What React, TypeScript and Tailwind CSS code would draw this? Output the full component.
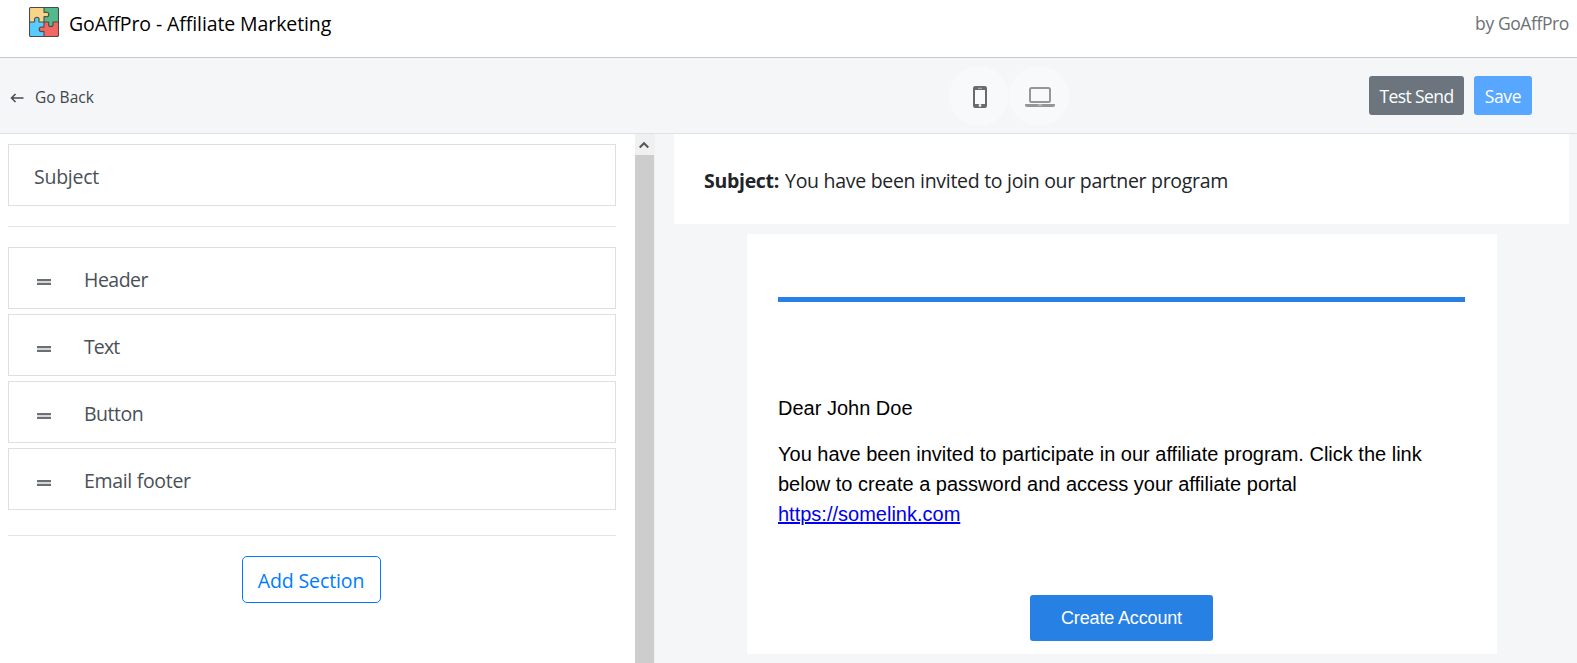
import React from "react";

const sections = [
  { label: "Header", tracking: "tracking-[-0.5px]" },
  { label: "Text", tracking: "tracking-[-0.9px]" },
  { label: "Button", tracking: "tracking-[-0.5px]" },
  { label: "Email footer", tracking: "tracking-[-0.32px]" },
];

function Logo() {
  return (
    <svg width="30" height="30" viewBox="0 0 30 30" className="block shrink-0">
      <rect x="0.5" y="0.5" width="29" height="29" rx="1.2" fill="#f7d488" />
      <path d="M15 .5h13.5a1 1 0 0 1 1 1V15h-5.200c-.9 0-.2 1.200-.2 2.300a2.300 2.300 0 0 1-4.600 0c0-1.100.8-2.300-.2-2.300H15V10c0-.9 1.200-.2 2.500-.2a2.300 2.300 0 0 0 0-4.600C16.200 5.200 15 6 15 5z" fill="#54b98c" />
      <path d="M.5 15h4.800c.9 0 .2-1.200.2-2.500a2.300 2.300 0 0 1 4.600 0c0 1.300-.8 2.500.2 2.500H15v4.800c0 .9-1.200.2-2.500.2a2.300 2.300 0 0 0 0 4.600c1.300 0 2.500-.8 2.500.2v4.700H1.500a1 1 0 0 1-1-1z" fill="#59ccff" />
      <path d="M15 15h4.300c1 0 .2 1.200.2 2.300a2.300 2.300 0 0 0 4.600 0c0-1.100-.7-2.300.2-2.300h5.200v13.500a1 1 0 0 1-1 1H15v-4.700c0-1-1.200-.2-2.500-.2a2.300 2.300 0 0 1 0-4.600c1.300 0 2.500.7 2.500-.2z" fill="#f16763" />
      <g fill="none" stroke="#4d4a45" strokeWidth="1.1">
        <rect x="0.5" y="0.5" width="29" height="29" rx="1.200" />
        <path d="M15 .5V5c0 1 1.200.2 2.500.2a2.300 2.300 0 0 1 0 4.600c-1.300 0-2.500-.7-2.500.2v9.800c0 .9-1.200.2-2.500.2a2.300 2.300 0 0 0 0 4.600c1.300 0 2.500-.8 2.500.2v4.700" />
        <path d="M.5 15h4.800c.9 0 .2-1.200.2-2.500a2.300 2.300 0 0 1 4.600 0c0 1.300-.8 2.500.2 2.500h9c1 0 .2 1.200.2 2.300a2.300 2.300 0 0 0 4.600 0c0-1.100-.7-2.300.2-2.300h5.200" />
      </g>
    </svg>
  );
}

function PhoneIcon() {
  return (
    <svg width="14" height="22" viewBox="0 0 14 22" className="block">
      <rect x="0" y="0" width="14" height="22" rx="2.200" fill="#6b6b6b" />
      <rect x="2" y="4" width="10" height="14" fill="#fafafa" />
      <rect x="5" y="1.800" width="4" height="1" rx="0.5" fill="#bbb" />
      <circle cx="7" cy="19.500" r="1.400" fill="#eee" />
    </svg>
  );
}

function LaptopIcon() {
  return (
    <svg width="30" height="20" viewBox="0 0 30 20" className="block">
      <rect x="5" y="1" width="20" height="14" rx="1.500" fill="none" stroke="#969696" strokeWidth="2" />
      <path d="M0 17h30v1q0 2-2 2H2q-2 0-2-2z" fill="#969696" />
      <rect x="13" y="17.600" width="4" height="0.900" fill="#d5d5d5" />
    </svg>
  );
}

export default function App() {
  return (
    <div className="flex h-[663px] w-full flex-col overflow-hidden bg-[#f4f6f8] font-['Open_Sans','Noto_Sans',sans-serif] text-[19.5px]">
      <header className="flex h-[58px] shrink-0 items-start justify-between border-b border-[#c9c9c9] bg-white pt-[7px] pr-2 pl-[29px]">
        <div className="flex items-center">
          <Logo />
          <h1 className="ml-2.5 h-[30px] leading-[34px] tracking-[-0.1px] whitespace-nowrap text-black">GoAffPro - Affiliate Marketing</h1>
        </div>
        <span className="text-[17.5px] leading-[33px] tracking-[-0.4px] whitespace-nowrap text-[#6d7175]">by GoAffPro</span>
      </header>

      <div className="flex h-[76px] shrink-0 items-start border-b border-[#dfe1e4]">
        <button className="mt-7 ml-2.5 flex w-[939px] items-center text-[15.5px] leading-[22px] text-[#40464c]">
          <svg width="14" height="12" viewBox="0 0 14 12" className="mt-0.5 mr-[11px] block" fill="none" stroke="#454a50" strokeWidth="1.5">
            <path d="M13.500 6H1.500M5.500 2L1.500 6l4 4" />
          </svg>
          Go Back
        </button>
        <div className="mt-2 flex">
          <button className="flex h-[60px] w-[60px] items-center justify-center rounded-full bg-[#f8f9fb] pt-0.5 pl-0.5">
            <PhoneIcon />
          </button>
          <button className="flex h-[60px] w-[60px] items-center justify-center rounded-full bg-[#f8f9fb] pt-0.5 pl-0.5">
            <LaptopIcon />
          </button>
        </div>
        <div className="mt-[18px] ml-[300px] flex gap-2.5 text-[17.5px] leading-[37px] text-white">
          <button className="flex h-[39px] w-[95px] items-center justify-center rounded-[3px] bg-[#6c757d] pt-0.5 tracking-[-0.6px] whitespace-nowrap">Test Send</button>
          <button className="flex h-[39px] w-[58px] items-center justify-center rounded-[3px] bg-[#57a6ff] pt-0.5 tracking-[-0.3px]">Save</button>
        </div>
      </div>

      <main className="flex min-h-0 flex-1">
        <aside className="w-[635px] shrink-0 bg-white pt-2.5 pr-[19px] pl-2 text-[#495057]">
          <div className="flex h-[62px] items-center border border-[#dedfe0] pt-1 pl-[25px] tracking-[-0.25px]">Subject</div>
          <hr className="my-5 border-[#e4e4e4]" />
          <div className="flex flex-col gap-[5px]">
            {sections.map((s) => (
              <div key={s.label} className="flex h-[62px] items-center border border-[#dedfe0] pt-1 pl-7">
                <span className="mt-1 mr-[33px] flex h-1.5 w-3.5 flex-col justify-between bg-[#d5d7d9]">
                  <span className="h-0.5 bg-[#6b7076]" />
                  <span className="h-0.5 bg-[#6b7076]" />
                </span>
                <span className={s.tracking}>{s.label}</span>
              </div>
            ))}
          </div>
          <hr className="mt-[25px] mb-5 border-[#e4e4e4]" />
          <div className="flex justify-center pr-0.5">
            <button className="flex h-[47px] w-[139px] items-center justify-center rounded-[5px] border border-[#007bff] pt-[3px] tracking-[-0.12px] whitespace-nowrap text-[#007bff]">Add Section</button>
          </div>
        </aside>

        <div className="flex w-5 shrink-0 flex-col bg-[#f0f0f0]">
          <div className="flex h-[21px] items-center justify-center pr-0.5">
            <svg width="10" height="8" viewBox="0 0 10 8" fill="none" stroke="#555" strokeWidth="2">
              <path d="M.7 6.500L5 2.200l4.300 4.300" />
            </svg>
          </div>
          <div className="w-[19px] flex-1 bg-[#cdcdcd]" />
        </div>

        <section className="flex-1 pr-2 pl-[19px]">
          <div className="flex h-[90px] items-center bg-white pt-1 pl-[30px] text-[#212529]">
            <strong className="mr-1.5 tracking-[-0.3px]">Subject:</strong>
            <span className="tracking-[-0.29px] whitespace-nowrap">You have been invited to join our partner program</span>
          </div>
          <div className="mt-2.5 ml-[73px] h-[420px] w-[750px] bg-white px-[31px] pt-[63px] font-['Liberation_Sans',Arial,sans-serif] text-[20px] leading-[30px] text-black">
            <div className="h-[5px] w-[687px] bg-[#2780e3]" />
            <p className="mt-[91px]">Dear John Doe</p>
            <p className="mt-4">
              You have been invited to participate in our affiliate program. Click the link
              <br />
              below to create a password and access your affiliate portal
              <br />
              <a href="#" className="text-[#0000ee] underline">https://somelink.com</a>
            </p>
            <div className="mt-[66px] flex pl-[252px]">
              <button className="h-[46px] w-[183px] rounded-[3px] bg-[#2780e3] text-[18px] leading-[46px] tracking-[-0.15px] text-white">Create Account</button>
            </div>
          </div>
        </section>
      </main>
    </div>
  );
}
